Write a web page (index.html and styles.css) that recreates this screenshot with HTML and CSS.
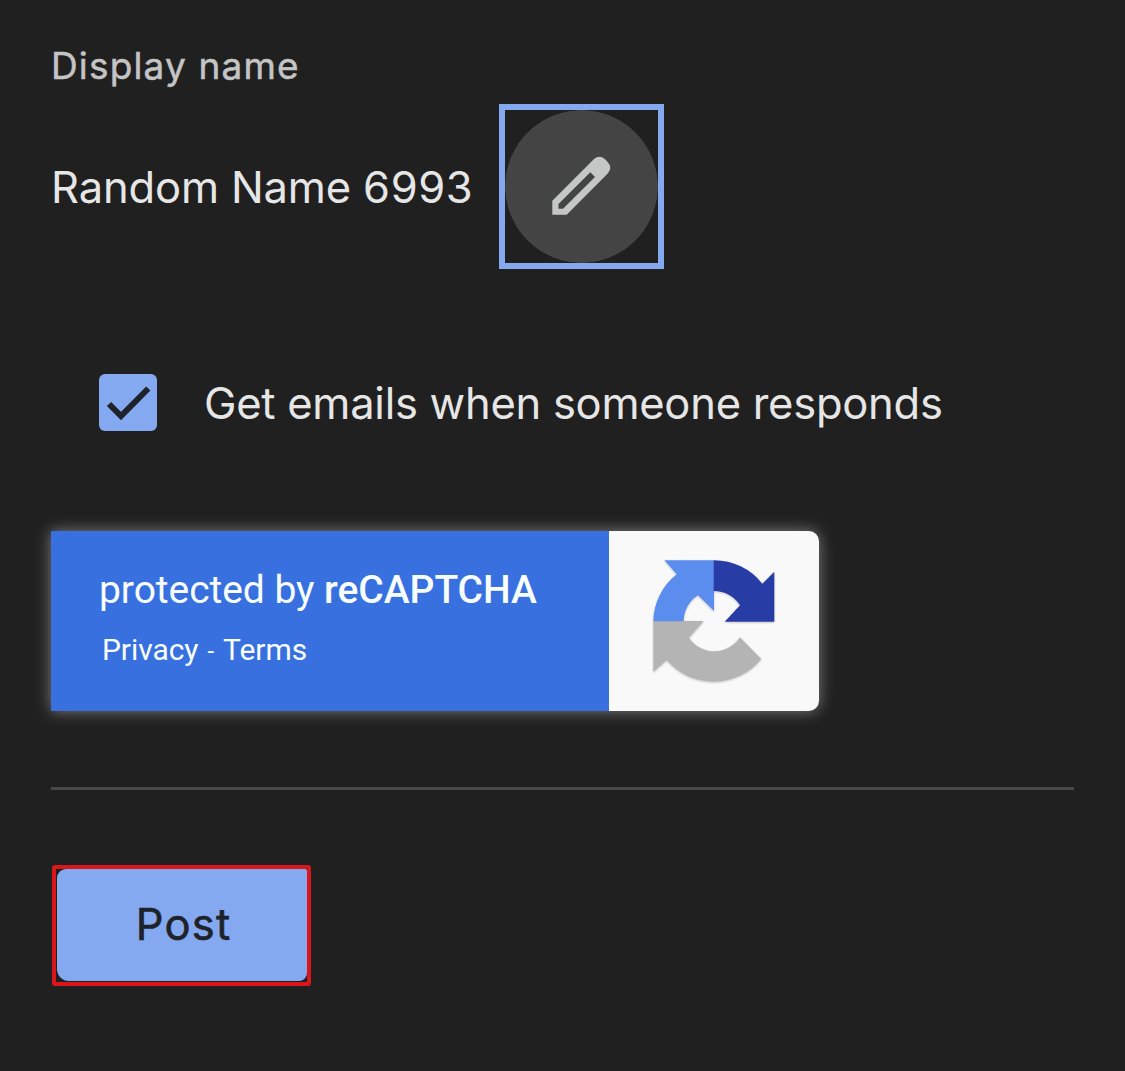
FILE: index.html
```html
<!DOCTYPE html>
<html lang="en">
<head>
<meta charset="utf-8">
<title>Post a question</title>
<link rel="stylesheet" href="styles.css">
</head>
<body>
<main class="form">
  <div class="label">Display name</div>
  <div class="name-row">
    <span class="name">Random Name <span class="digits">6993</span></span>
    <button class="edit" aria-label="Edit display name">
      <svg class="edit-icon" viewBox="0 0 153 153"><path fill-rule="evenodd" d="M47.3 104.7V90.7L89 49Q94.3 44.3 99.8 49L102.7 52Q107.6 57.5 103 63.2L61.7 104.7ZM53.5 98.8H58L90 67L85.3 62.2L53.5 94Z"/></svg>
    </button>
  </div>
  <label class="check-row">
    <span class="checkbox">
      <svg viewBox="0 0 58 58"><path d="M10 30L22 42L49.3 14.5"/></svg>
    </span>
    <span class="check-text">Get emails when someone responds</span>
  </label>
  <section class="captcha">
    <div class="captcha-info">
      <div class="captcha-title">protected by <strong>reCAPTCHA</strong></div>
      <div class="captcha-links"><span>Privacy</span><span class="dash">-</span><span>Terms</span></div>
    </div>
    <div class="captcha-logo">
      <svg viewBox="0 0 126 130">
        <path fill="#b4b4b4" d="M2.3 63H52.7L38 79.7A30.5 30.5 0 0 0 89 79.3L110.3 101A61.5 61.5 0 0 1 15.7 102L2.3 114Z"/>
        <path fill="#5b8def" d="M13.3 2.3H63V53L47 37.3A30.5 30.5 0 0 0 32.7 63.3H2.3A61 61 0 0 1 25.7 16.3Z"/>
        <path fill="#283ca6" d="M62.7 2.3A61 61 0 0 1 111.3 25.7L123.3 13.7V63.7H73.7L89 47.3A31 31 0 0 0 62.7 33Z"/>
      </svg>
    </div>
  </section>
  <hr class="divider">
  <div class="post-frame"><button class="post">Post</button></div>
</main>
</body>
</html>
```

FILE: styles.css
```css
* { box-sizing: border-box; }
body {
  margin: 0;
  min-height: 1071px;
  background: #202020;
  color: #e6e6e6;
  font-family: Inter, "Liberation Sans", sans-serif;
}
button { font: inherit; padding: 0; border: 0; }
svg { display: block; }
.form {
  display: flex;
  flex-direction: column;
  align-items: flex-start;
  padding: 42px 51px 0;
}
.label {
  height: 62px;
  line-height: 48px;
  font-size: 37px;
  letter-spacing: 1.15px;
  color: #c4c4c4;
  -webkit-text-stroke: 0.5px #c4c4c4;
  white-space: nowrap;
}
.name-row { display: flex; align-items: center; height: 165px; }
.name {
  width: 448px;
  font-size: 43.5px;
  line-height: 54px;
  letter-spacing: -0.15px;
  white-space: nowrap;
}
.digits { letter-spacing: 0.6px; }
.edit {
  width: 165px;
  height: 165px;
  border: 6px solid #85a9ee;
  background: radial-gradient(circle closest-side, #444 99.3%, #202020 100%);
}
.edit-icon { width: 153px; height: 153px; fill: #c4c7c5; }
.check-row {
  display: flex;
  align-items: flex-start;
  gap: 47px;
  height: 58px;
  margin: 105px 0 0 48px;
}
.checkbox { width: 58px; height: 57px; border-radius: 6px; background: #85a9f0; }
.checkbox path { fill: none; stroke: #1d2329; stroke-width: 6; }
.check-text {
  font-size: 43.5px;
  line-height: 58px;
  letter-spacing: -0.26px;
  white-space: nowrap;
}
.captcha {
  display: flex;
  width: 768px;
  height: 180px;
  margin-top: 99px;
  border-radius: 0 10px 10px 0;
  overflow: hidden;
  box-shadow: 0 0 15px #808080;
}
.captcha-info {
  width: 558px;
  padding: 34px 0 0 48px;
  background: #3871df;
  color: #f8fdff;
  font-family: Roboto, sans-serif;
  white-space: nowrap;
}
.captcha-title { font-size: 39px; line-height: 50px; letter-spacing: -0.05px; }
.captcha-title strong { font-weight: 500; }
.captcha-links {
  display: flex;
  gap: 9px;
  padding: 15px 0 0 3px;
  font-size: 30px;
  line-height: 40px;
  letter-spacing: -0.06px;
}
.dash { font-size: 24px; line-height: 43px; }
.captcha-logo { flex: 1; padding: 27px 0 0 42px; background: #f9f9f9; }
.captcha-logo svg { width: 126px; height: 130px; filter: drop-shadow(0 1px 1px #0003); }
.divider {
  width: 1023px;
  height: 3px;
  margin: 76px 0 75px;
  border: 0;
  background: #484848;
}
.post-frame {
  width: 259px;
  height: 121px;
  margin-left: 1px;
  padding: 0 0 1px 1px;
  border: 4px solid #d9161c;
  border-radius: 3px;
}
.post {
  display: block;
  width: 250px;
  height: 112px;
  padding: 0 0 2px 3px;
  border-radius: 9px 2px 8px 12px;
  background: #85a9f0;
  color: #1d2329;
  font-size: 43.5px;
  -webkit-text-stroke: 0.6px #1d2329;
  letter-spacing: 1.2px;
}
```
